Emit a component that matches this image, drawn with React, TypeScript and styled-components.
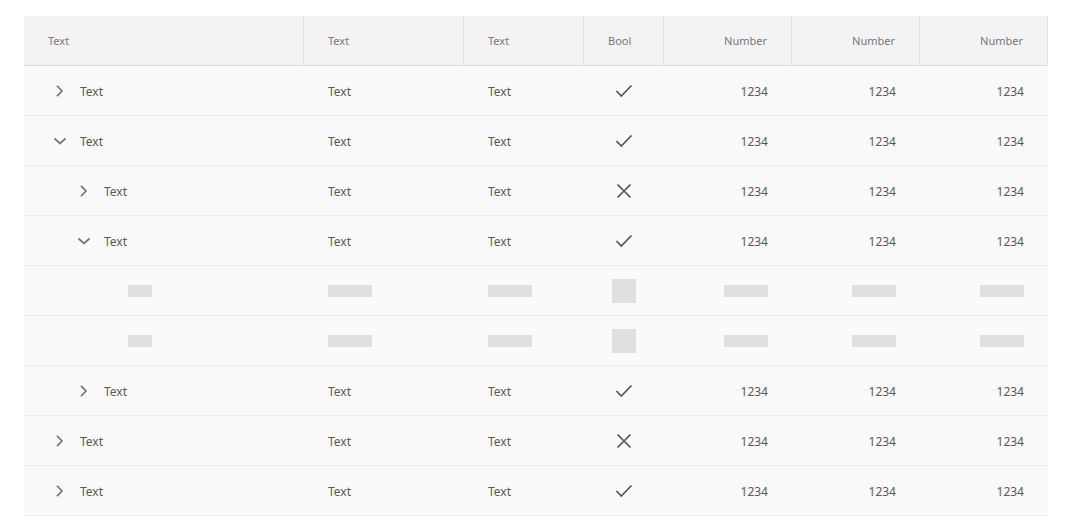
import React from "react";
import styled, { createGlobalStyle } from "styled-components";

const Global = createGlobalStyle`
  html, body { margin: 0; padding: 0; background: #ffffff; }
  body { font-family: "Noto Sans", "Open Sans", sans-serif; }
`;

const COLS = "280px 160px 120px 80px 128px 128px 128px";

const Page = styled.div`
  padding: 16px 24px;
`;

const Table = styled.div`
  width: 1024px;
  display: flex;
  flex-direction: column;
`;

const HeaderRow = styled.div`
  display: grid;
  grid-template-columns: ${COLS};
  height: 50px;
  background: #f3f3f3;
  border-bottom: 1px solid #dedede;
  box-sizing: border-box;
`;

type Align = "left" | "center" | "right";

const HeadCell = styled.div<{ $align: Align }>`
  display: flex;
  align-items: center;
  justify-content: ${(p) =>
    p.$align === "left" ? "flex-start" : p.$align === "center" ? "center" : "flex-end"};
  padding: 0 24px;
  border-right: 1px solid #e0e0e0;
  font-size: 11px;
  color: #777777;
  box-sizing: border-box;
`;

const BodyRow = styled.div`
  display: grid;
  grid-template-columns: ${COLS};
  height: 50px;
  background: #fafafa;
  border-bottom: 1px solid #ececec;
  box-sizing: border-box;
`;

const Cell = styled.div<{ $align: Align }>`
  display: flex;
  align-items: center;
  justify-content: ${(p) =>
    p.$align === "left" ? "flex-start" : p.$align === "center" ? "center" : "flex-end"};
  padding: ${(p) => (p.$align === "center" ? "0" : "2px 24px 0")};
  font-size: 12px;
  color: #585858;
  box-sizing: border-box;
`;

const TreeCell = styled.div<{ $level: number }>`
  display: flex;
  align-items: center;
  padding-left: ${(p) => 24 + p.$level * 24}px;
  font-size: 12px;
  color: #585858;
  box-sizing: border-box;
`;

const TreeLabel = styled.span`
  padding-top: 2px;
`;

const Toggle = styled.span`
  width: 24px;
  height: 24px;
  margin-right: 8px;
  display: flex;
  align-items: center;
  justify-content: center;
  flex: none;
`;

const Skeleton = styled.div<{ $w: number; $h: number }>`
  width: ${(p) => p.$w}px;
  height: ${(p) => p.$h}px;
  background: #e0e0e0;
`;

const SkeletonTree = styled.div`
  display: flex;
  align-items: center;
  padding-left: 104px;
`;

const SkeletonCell = styled.div<{ $align: Align }>`
  display: flex;
  align-items: center;
  justify-content: ${(p) =>
    p.$align === "left" ? "flex-start" : p.$align === "center" ? "center" : "flex-end"};
  padding: ${(p) => (p.$align === "center" ? "0" : "0 24px")};
`;

const ChevronRight = () => (
  <svg width="12" height="14" viewBox="0 0 12 14">
    <path d="M3 1.8 L8 7 L3 12.2" fill="none" stroke="#7a7a7a" strokeWidth="1.8" />
  </svg>
);

const ChevronDown = () => (
  <svg width="14" height="10" viewBox="0 0 14 10">
    <path d="M1.5 2.5 L7 7.5 L12.5 2.5" fill="none" stroke="#7a7a7a" strokeWidth="1.8" />
  </svg>
);

const Check = () => (
  <svg width="18" height="14" viewBox="0 0 18 14">
    <path d="M1.5 7 L6.3 12 L16.5 1.5" fill="none" stroke="#555555" strokeWidth="1.7" />
  </svg>
);

const Cross = () => (
  <svg width="16" height="16" viewBox="0 0 16 16">
    <path d="M1.5 1.5 L14.5 14.5 M14.5 1.5 L1.5 14.5" fill="none" stroke="#555555" strokeWidth="1.7" />
  </svg>
);

type Row =
  | { kind: "data"; level: number; open: boolean; bool: boolean }
  | { kind: "skeleton" };

const rows: Row[] = [
  { kind: "data", level: 0, open: false, bool: true },
  { kind: "data", level: 0, open: true, bool: true },
  { kind: "data", level: 1, open: false, bool: false },
  { kind: "data", level: 1, open: true, bool: true },
  { kind: "skeleton" },
  { kind: "skeleton" },
  { kind: "data", level: 1, open: false, bool: true },
  { kind: "data", level: 0, open: false, bool: false },
  { kind: "data", level: 0, open: false, bool: true },
];

const headers: { label: string; align: Align }[] = [
  { label: "Text", align: "left" },
  { label: "Text", align: "left" },
  { label: "Text", align: "left" },
  { label: "Bool", align: "left" },
  { label: "Number", align: "right" },
  { label: "Number", align: "right" },
  { label: "Number", align: "right" },
];

export default function App() {
  return (
    <Page>
      <Global />
      <Table>
        <HeaderRow>
          {headers.map((h, i) => (
            <HeadCell key={i} $align={h.align}>
              {h.label}
            </HeadCell>
          ))}
        </HeaderRow>
        {rows.map((r, i) =>
          r.kind === "skeleton" ? (
            <BodyRow key={i}>
              <SkeletonTree>
                <Skeleton $w={24} $h={12} />
              </SkeletonTree>
              <SkeletonCell $align="left">
                <Skeleton $w={44} $h={12} />
              </SkeletonCell>
              <SkeletonCell $align="left">
                <Skeleton $w={44} $h={12} />
              </SkeletonCell>
              <SkeletonCell $align="center">
                <Skeleton $w={24} $h={24} />
              </SkeletonCell>
              <SkeletonCell $align="right">
                <Skeleton $w={44} $h={12} />
              </SkeletonCell>
              <SkeletonCell $align="right">
                <Skeleton $w={44} $h={12} />
              </SkeletonCell>
              <SkeletonCell $align="right">
                <Skeleton $w={44} $h={12} />
              </SkeletonCell>
            </BodyRow>
          ) : (
            <BodyRow key={i}>
              <TreeCell $level={r.level}>
                <Toggle>{r.open ? <ChevronDown /> : <ChevronRight />}</Toggle>
                <TreeLabel>Text</TreeLabel>
              </TreeCell>
              <Cell $align="left">Text</Cell>
              <Cell $align="left">Text</Cell>
              <Cell $align="center">{r.bool ? <Check /> : <Cross />}</Cell>
              <Cell $align="right">1234</Cell>
              <Cell $align="right">1234</Cell>
              <Cell $align="right">1234</Cell>
            </BodyRow>
          )
        )}
      </Table>
    </Page>
  );
}
